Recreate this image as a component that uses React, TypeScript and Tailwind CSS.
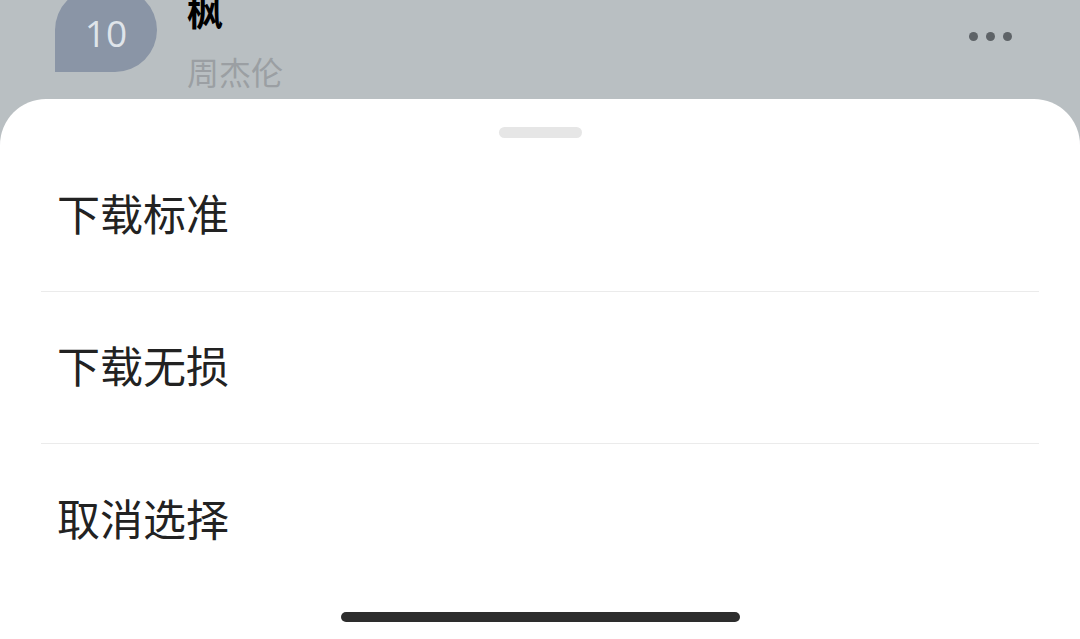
import React from "react";

export default function App() {
  const items = ["下载标准", "下载无损", "取消选择"];
  return (
    <div
      className="w-[1080px] h-[639px] bg-[#b9bfc2] overflow-hidden flex flex-col"
      style={{ fontFamily: '"Noto Sans CJK SC", "Noto Sans", sans-serif' }}
    >
      <div className="h-[99px] shrink-0 flex items-start pl-[55px] pr-[68px] relative overflow-hidden">
        <div className="mt-[-12px] w-[102px] h-[84px] rounded-[42px] rounded-bl-none bg-[#8a95a6] flex items-center justify-center pt-[4px]">
          <span className="text-[37px] leading-none text-[#dfe4ea]" style={{ fontFamily: '"Open Sans", sans-serif' }}>10</span>
        </div>
        <div className="ml-[30px] flex flex-col mt-[-12px]">
          <span className="text-[36px] leading-[44px] font-bold text-black">枫</span>
          <span className="text-[32px] leading-[44px] mt-[17px] text-[#9b9fa3]">周杰伦</span>
        </div>
        <div className="ml-auto mt-[32px] flex gap-[8px]">
          <span className="w-[9px] h-[9px] rounded-full bg-[#5e6367]" />
          <span className="w-[9px] h-[9px] rounded-full bg-[#5e6367]" />
          <span className="w-[9px] h-[9px] rounded-full bg-[#5e6367]" />
        </div>
      </div>
      <div className="flex-1 bg-white rounded-t-[46px] flex flex-col">
        <div className="flex justify-center pt-[28px]">
          <div className="w-[83px] h-[11px] rounded-full bg-[#e6e6e6]" />
        </div>
        <div className="flex flex-col px-[41px] mt-[2px]">
          {items.map((t, i) => (
            <div
              key={t}
              className={`h-[152px] flex items-center pl-[16px] pb-[6px] ${i < items.length - 1 ? "border-b border-[#ebebeb]" : ""}`}
            >
              <span className="text-[43px] leading-none text-[#222222]">{t}</span>
            </div>
          ))}
        </div>
        <div className="flex justify-center mt-auto pb-[17px]">
          <div className="w-[399px] h-[10px] rounded-full bg-[#2d2d2d]" />
        </div>
      </div>
    </div>
  );
}
